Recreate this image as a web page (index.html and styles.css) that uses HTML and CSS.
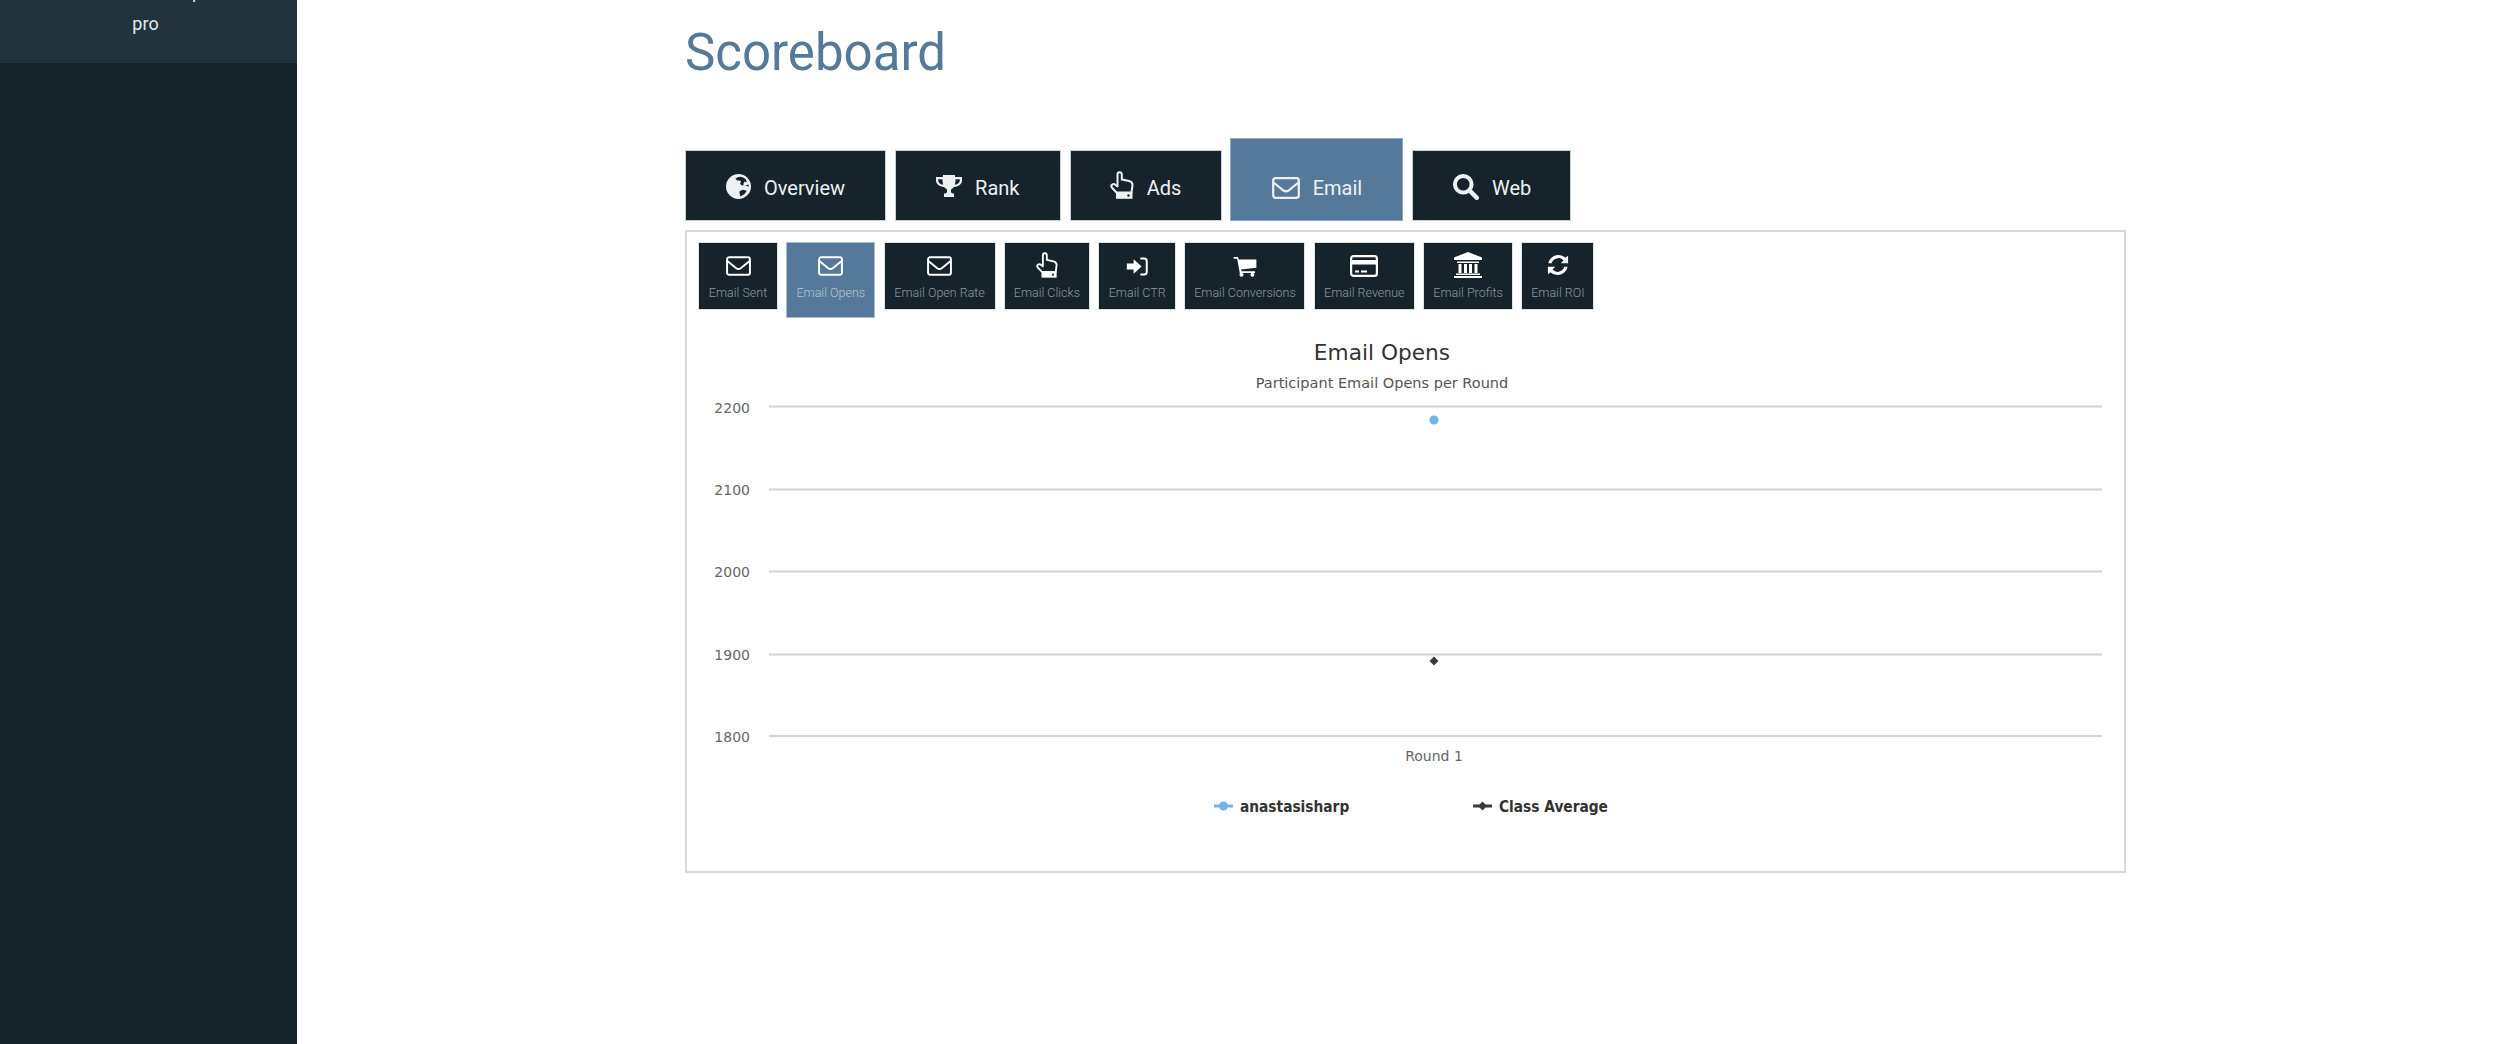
FILE: index.html
```html
<!DOCTYPE html>
<html lang="en">
<head>
<meta charset="utf-8">
<title>Scoreboard</title>
<link rel="stylesheet" href="styles.css">
</head>
<body>
<svg class="defs" aria-hidden="true">
<symbol id="i-env" viewBox="0 0 28 22"><rect x="1.200" y="1.200" width="25.600" height="19.600" rx="2.200" fill="none" stroke="currentColor" stroke-width="2.200"/><path d="M1.500 5.500 L11.500 13.500 Q14 15.300 16.500 13.500 L26.500 5.500" fill="none" stroke="currentColor" stroke-width="2.200"/></symbol>
<symbol id="i-globe" viewBox="0 0 24 24"><circle cx="12" cy="12" r="12" fill="currentColor"/><path fill="#17232a" d="M9 4.500q3-2.500 7-1.500l3 2 1 3-2.500-.5-1 2.500 2 1 3-1 .5 2-2-.5-3-1-2 .5-1.500-2 1-2-2.500-1-1 .5zM13 16.500l3-1.500 4 1-2.500 3.500-3.500 2-1-2.500z"/></symbol>
<symbol id="i-trophy" viewBox="0 0 26 22"><path fill="currentColor" fill-rule="evenodd" d="M7 0h12v2h7v3.500c0 3.500-3.500 6-8 6.500-1 1.200-2.500 2-3 2.500v2.500c0 .8 1 1.500 3 1.500V22H8v-3.500c2 0 3-.7 3-1.500v-2.500c-.5-.5-2-1.300-3-2.500-4.500-.5-8-3-8-6.500V2h7zM2.200 4.200v1.300c0 2 2 3.700 5 4.300-.5-1.700-.7-3.700-.8-5.600zm21.600 0h-4.200c-.1 1.900-.3 3.900-.8 5.600 3-.6 5-2.300 5-4.300z"/></symbol>
<symbol id="i-hand" viewBox="0 0 24 28"><path fill="none" stroke="currentColor" stroke-width="2" stroke-linejoin="round" d="M6.500 21.500 L1.800 16.500 Q.6 14.800 2.200 13.600 Q4 12.400 5.500 14 L7.500 15.500 L7.500 3.600 Q7.500 1.200 9.600 1.200 Q11.800 1.200 11.800 3.600 L11.800 8.500 L19 10 Q22.500 10.800 22.500 14 L21.500 21.500 Z"/><path fill="currentColor" d="M6 21h16.500v6.800H6z"/><circle cx="18.500" cy="24.500" r="1.200" fill="#17232a"/></symbol>
<symbol id="i-signin" viewBox="0 0 26 22"><path fill="currentColor" d="M1 7.500h8V2.500L18.500 11 9 19.500v-5H1z"/><path fill="none" stroke="currentColor" stroke-width="2.400" d="M17 1.500h4.500q3 0 3 3v13q0 3-3 3H17"/></symbol>
<symbol id="i-cart" viewBox="0 0 26 24"><path fill="currentColor" d="M0 1h5l1 3h20v9.500L8.500 15.500l.5 2h15.500v2H7L4 3H0z"/><circle cx="9" cy="21.500" r="2.300" fill="currentColor"/><circle cx="21.500" cy="21.500" r="2.300" fill="currentColor"/></symbol>
<symbol id="i-card" viewBox="0 0 28 22"><rect x="1.100" y="1.100" width="25.800" height="19.800" rx="2.400" fill="none" stroke="currentColor" stroke-width="2.200"/><path fill="currentColor" d="M1 5h26v4.500H1zM5 15.500h4v2H5zM11 15.500h6v2h-6z"/></symbol>
<symbol id="i-bank" viewBox="0 0 28 26"><path fill="currentColor" d="M14 0 28 5.500V8H0V5.500zM3 9.500h22V11H3zM4.500 12h3v9h-3zM10 12h3v9h-3zM15 12h3v9h-3zM20.500 12h3v9h-3zM2 21.500h24V23H2zM0 24h28v2.200H0z"/></symbol>
<symbol id="i-refresh" viewBox="0 0 24 24"><path fill="currentColor" d="M23 2v8h-8l3-3C16 5 13.800 4.400 12 4.500 8.500 4.700 6 7 5 10H1.500C2.500 5 7 1 12 1c3 0 6 1.200 8 3zM1 22v-8h8l-3 3c2 2 4.200 2.600 6 2.500 3.500-.2 6-2.500 7-5.500h3.500C21.500 19 17 23 12 23c-3 0-6-1.200-8-3z"/></symbol>
<symbol id="i-search" viewBox="0 0 24 24"><circle cx="10" cy="10" r="7.400" fill="none" stroke="currentColor" stroke-width="3.600"/><path d="M15.500 15.500 22 22" stroke="currentColor" stroke-width="4" stroke-linecap="round"/></symbol>
</svg>
<div class="layout">
  <aside class="sidebar">
    <div class="user-block">
      <p class="user-line clipped">anastasisharp</p>
      <p class="user-line">pro</p>
    </div>
  </aside>
  <main class="main">
    <h1 class="page-title">Scoreboard</h1>
    <nav class="tabs">
      <a class="tab"><svg class="tab-icon w-globe"><use href="#i-globe"/></svg>Overview</a>
      <a class="tab"><svg class="tab-icon w-trophy"><use href="#i-trophy"/></svg>Rank</a>
      <a class="tab"><svg class="tab-icon w-hand"><use href="#i-hand"/></svg>Ads</a>
      <a class="tab active"><svg class="tab-icon w-env"><use href="#i-env"/></svg>Email</a>
      <a class="tab"><svg class="tab-icon w-search"><use href="#i-search"/></svg>Web</a>
    </nav>
    <section class="panel">
      <nav class="subtabs">
        <a class="subtab"><svg class="sub-icon s-env"><use href="#i-env"/></svg>Email Sent</a>
        <a class="subtab active"><svg class="sub-icon s-env"><use href="#i-env"/></svg>Email Opens</a>
        <a class="subtab"><svg class="sub-icon s-env"><use href="#i-env"/></svg>Email Open Rate</a>
        <a class="subtab"><svg class="sub-icon s-hand"><use href="#i-hand"/></svg>Email Clicks</a>
        <a class="subtab"><svg class="sub-icon s-signin"><use href="#i-signin"/></svg>Email CTR</a>
        <a class="subtab"><svg class="sub-icon s-cart"><use href="#i-cart"/></svg>Email Conversions</a>
        <a class="subtab"><svg class="sub-icon s-card"><use href="#i-card"/></svg>Email Revenue</a>
        <a class="subtab"><svg class="sub-icon s-bank"><use href="#i-bank"/></svg>Email Profits</a>
        <a class="subtab"><svg class="sub-icon s-refresh"><use href="#i-refresh"/></svg>Email ROI</a>
      </nav>
      <svg class="chart" viewBox="0 0 1437 554">
        <text class="c-title" x="695" y="42" text-anchor="middle">Email Opens</text>
        <text class="c-sub" x="695" y="70" text-anchor="middle">Participant Email Opens per Round</text>
        <g class="c-grid">
          <line x1="82" x2="1415" y1="88.500" y2="88.500"/>
          <line x1="82" x2="1415" y1="171.500" y2="171.500"/>
          <line x1="82" x2="1415" y1="253.500" y2="253.500"/>
          <line x1="82" x2="1415" y1="336.500" y2="336.500"/>
          <line class="c-axis" x1="82" x2="1415" y1="418" y2="418"/>
        </g>
        <g class="c-ylabels">
          <text x="63" y="95" text-anchor="end">2200</text>
          <text x="63" y="177" text-anchor="end">2100</text>
          <text x="63" y="259" text-anchor="end">2000</text>
          <text x="63" y="342" text-anchor="end">1900</text>
          <text x="63" y="424" text-anchor="end">1800</text>
        </g>
        <circle class="c-blue" cx="747" cy="102" r="4.500"/>
        <path class="c-dark" d="M747 338.500l4.500 4.500-4.500 4.500-4.500-4.500z"/>
        <text class="c-xlabel" x="747" y="443" text-anchor="middle">Round 1</text>
        <g class="c-legend">
          <line class="c-blue-line" x1="527" x2="546" y1="488" y2="488"/>
          <circle class="c-blue" cx="536.500" cy="488" r="4.500"/>
          <text x="553" y="494">anastasisharp</text>
          <line class="c-dark-line" x1="786" x2="805" y1="488" y2="488"/>
          <path class="c-dark" d="M795.500 483.500l4.500 4.500-4.500 4.500-4.500-4.500z"/>
          <text x="812" y="494">Class Average</text>
        </g>
      </svg>
    </section>
  </main>
</div>
</body>
</html>
```
FILE: styles.css
```css
* { box-sizing: border-box; }
html, body { margin: 0; height: 100%; background: #fff; overflow: hidden; }
body { font-family: Roboto, "Liberation Sans", sans-serif; }
.defs { position: absolute; width: 0; height: 0; }
.layout { display: flex; height: 1044px; }
.sidebar { width: 297px; flex: none; background: #17232a; }
.user-block { height: 63px; background: #21343c; color: #e6eaec; text-align: center; font-size: 18px; font-weight: 400; overflow: hidden; padding-right: 6px; }
.user-line { margin: 0; line-height: 26px; }
.clipped { margin-top: -22px; height: 33px; line-height: 28px; }
.main { flex: 1; min-width: 0; padding-left: 388px; padding-right: 374px; }
.page-title { margin: 0; height: 138px; padding-top: 22px; font-size: 51px; line-height: 61px; font-weight: 400; color: #54799a; }
.tabs { display: grid; grid-template-columns: 201px 166px 152px 173px 159px; column-gap: 8.800px; justify-content: start; align-items: end; height: 83px; }
.tab { display: flex; align-items: center; justify-content: center; gap: 13px; height: 71px; padding-top: 4px; background: #17232a; color: #eef1f2; font-size: 20px; font-weight: 400; border: 1px solid #c9d0d4; }
.tab.active { height: 83px; padding-top: 16px; background: #54799a; border-color: #8fa9bd; }
.w-env { width: 28px; height: 22px; }
.w-globe { width: 25px; height: 25px; margin-top: -3px; }
.w-trophy { width: 26px; height: 22px; margin-top: -3px; }
.w-hand { width: 24px; height: 28px; margin-top: -6px; }
.w-search { width: 27px; height: 27px; margin-top: -2px; }
.panel { margin-top: 9px; height: 643px; border: 2px solid #d6dadb; padding: 10px 11px 0; }
.subtabs { display: grid; grid-template-columns: 80px 89px 112px 86px 78px 121px 101px 90px 73px; column-gap: 8.300px; align-items: start; height: 76px; }
.subtab { display: flex; flex-direction: column; align-items: center; height: 68px; padding-top: 9px; background: #17232a; color: #8d979c; font-size: 12.500px; font-weight: 300; white-space: nowrap; border: 1px solid #dfe3e5; }
.subtab.active { height: 76px; background: #54799a; color: #b4c5d2; border-color: #a9bccb; }
.sub-icon { color: #fff; margin-bottom: 7px; flex: none; }
.s-env { width: 25px; height: 20px; margin-top: 4px; margin-bottom: 9px; }
.s-hand { width: 22px; height: 26px; }
.s-signin { width: 22px; height: 19px; margin-top: 5px; margin-bottom: 9px; }
.s-cart { width: 24px; height: 21px; margin-top: 4px; margin-bottom: 8px; }
.s-card { width: 28px; height: 22px; margin-top: 3px; margin-bottom: 8px; }
.s-bank { width: 28px; height: 26px; }
.s-refresh { width: 22px; height: 22px; margin-top: 2px; margin-bottom: 9px; }
.chart { display: block; width: 1437px; height: 554px; margin: 0 -11px; font-family: "DejaVu Sans", sans-serif; }
.c-title { font-size: 21.700px; fill: #333; }
.c-sub { font-size: 14.500px; fill: #555; }
.c-grid line { stroke: #d3d3d3; stroke-width: 2; }
.c-grid .c-axis { stroke: #c5d6e6; }
.c-ylabels text, .c-xlabel { font-size: 14px; fill: #666; }
.c-blue { fill: #6cb6ec; }
.c-dark { fill: #3a3a40; }
.c-blue-line { stroke: #6cb6ec; stroke-width: 3; }
.c-dark-line { stroke: #3a3a40; stroke-width: 3; }
.c-legend text { font-family: "DejaVu Sans Condensed", "DejaVu Sans", sans-serif; font-stretch: condensed; font-size: 15.300px; font-weight: 700; fill: #333; }
```
